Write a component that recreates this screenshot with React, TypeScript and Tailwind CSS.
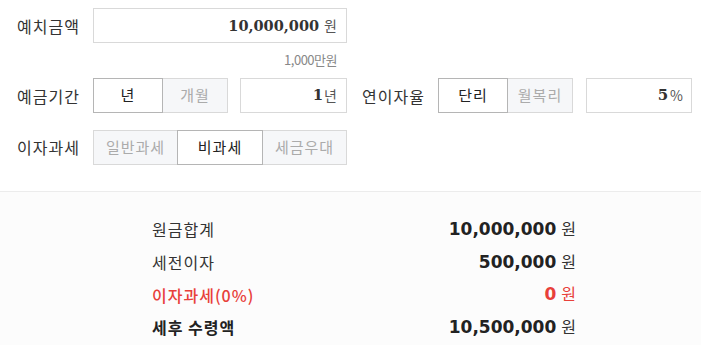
import React from "react";

const kr = "font-['Noto_Sans_CJK_KR',sans-serif]";
const serifNum = "font-['DejaVu_Serif',serif] font-bold text-[#333]";
const sansNum = "font-['DejaVu_Sans',sans-serif] font-bold";

function Toggle({ items, active, widths }: { items: string[]; active: number; widths: string[] }) {
  return (
    <div className="flex h-[35px]">
      {items.map((t, i) => (
        <div
          key={t}
          className={
            "flex items-center justify-center text-[15px] tracking-[1px] border " +
            widths[i] +
            (i > 0 ? " -ml-px " : " ") +
            (i === active
              ? "relative z-10 bg-white border-[#b5b5b5] text-[#222]"
              : "bg-[#f6f7f9] border-[#d9d9d9] text-[#ababab]")
          }
        >
          {t}
        </div>
      ))}
    </div>
  );
}

function ResultRow({ label, value, tone }: { label: string; value: string; tone?: "red" | "bold" }) {
  const labelCls =
    tone === "red"
      ? "text-[#e8403a] font-medium"
      : tone === "bold"
        ? "text-[#222] font-bold"
        : "text-[#333]";
  const numCls = tone === "red" ? "text-[#e8403a]" : "text-[#222]";
  return (
    <div className="flex h-[32.7px] items-center justify-between">
      <span className={"text-[16px] tracking-[1px] " + labelCls}>{label}</span>
      <span className="flex items-baseline">
        <span className={sansNum + " text-[17px] " + numCls}>{value}</span>
        <span className={"ml-[5px] text-[16px] " + (tone === "red" ? "text-[#e8403a]" : "text-[#333]")}>원</span>
      </span>
    </div>
  );
}

export default function App() {
  return (
    <div className={"w-[701px] h-[345px] bg-white overflow-hidden " + kr}>
      <div className="h-[191px] pl-[17px] pt-[8px]">
        <div className="flex items-center h-[35px]">
          <div className="w-[76px] text-[16px] tracking-[1px] text-[#333]">예치금액</div>
          <div className="w-[254px] h-[35px] border border-[#d9d9d9] flex items-center justify-end pr-[9px]">
            <span className={serifNum + " text-[14.5px]"}>10,000,000</span>
            <span className="ml-[5px] text-[14px] text-[#555]">원</span>
          </div>
        </div>
        <div className="ml-[76px] w-[244px] h-[33px] flex items-center justify-end text-[13px] text-[#888] tracking-[-0.5px]">
          1,000만원
        </div>
        <div className="flex items-center h-[35px] mt-[2px]">
          <div className="w-[76px] text-[16px] tracking-[1px] text-[#333]">예금기간</div>
          <Toggle items={["년", "개월"]} active={0} widths={["w-[70px]", "w-[66px]"]} />
          <div className="ml-[12px] w-[107px] h-[35px] border border-[#d9d9d9] flex items-center justify-end pr-[9px]">
            <span className={serifNum + " text-[15px]"}>1</span>
            <span className="ml-[1px] text-[14px] text-[#555]">년</span>
          </div>
          <div className="ml-[15px] w-[76px] text-[16px] tracking-[1px] text-[#333]">연이자율</div>
          <Toggle items={["단리", "월복리"]} active={0} widths={["w-[70px]", "w-[66px]"]} />
          <div className="ml-[13px] w-[106px] h-[35px] border border-[#d9d9d9] flex items-center justify-end pr-[8px]">
            <span className={serifNum + " text-[15px]"}>5</span>
            <span className="ml-[2px] text-[14px] text-[#555]">%</span>
          </div>
        </div>
        <div className="flex items-center h-[36px] mt-[16px]">
          <div className="w-[76px] text-[16px] tracking-[1px] text-[#333]">이자과세</div>
          <Toggle
            items={["일반과세", "비과세", "세금우대"]}
            active={1}
            widths={["w-[85px]", "w-[86px]", "w-[85px]"]}
          />
        </div>
      </div>
      <div className="h-[154px] border-t border-[#ececec] bg-[#fcfcfc] pt-[21px]">
        <div className="ml-[152px] w-[424px]">
          <ResultRow label="원금합계" value="10,000,000" />
          <ResultRow label="세전이자" value="500,000" />
          <ResultRow label="이자과세(0%)" value="0" tone="red" />
          <ResultRow label="세후 수령액" value="10,500,000" tone="bold" />
        </div>
      </div>
    </div>
  );
}
